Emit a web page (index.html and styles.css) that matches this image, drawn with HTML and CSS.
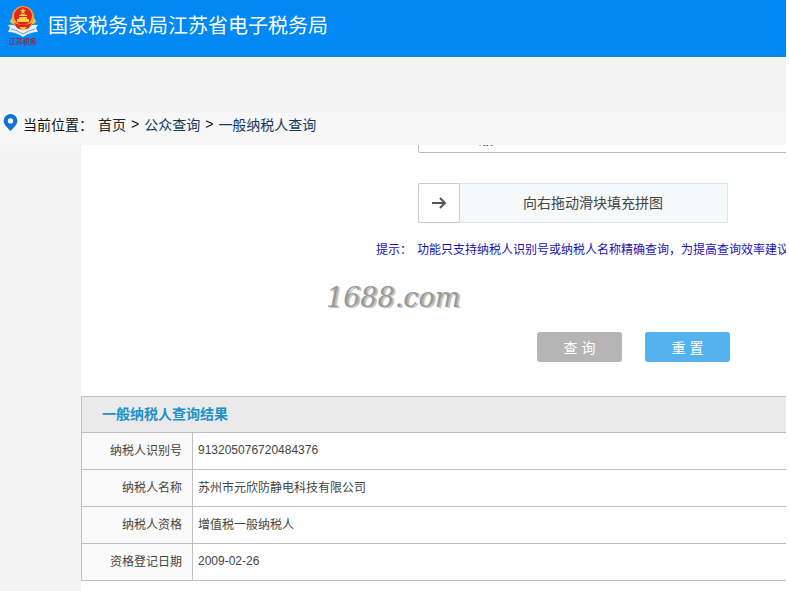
FILE: index.html
```html
<!DOCTYPE html>
<html lang="zh-CN">
<head>
<meta charset="utf-8">
<title>国家税务总局江苏省电子税务局</title>
<link rel="stylesheet" href="styles.css">
</head>
<body>
<header class="header">
  <svg class="logo" viewBox="0 0 32 42" aria-hidden="true">
    <path d="M1 20q7-1 15 5q8-6 15-5l-2 3 2 4q-8 0-15 5Q9 27 1 27l2-4z" fill="#e9f2fb"/>
    <path d="M3 16q5 1 13 8q8-7 13-8M4 24q6 1 12 5q6-4 12-5" fill="none" stroke="#6c9fce"/>
    <path d="M5 13q-3 3-1 5q4 1 7 6h10q3-5 7-6q2-2-1-5z" fill="#f4c542"/>
    <circle cx="16" cy="12" r="11" fill="#f2a632"/>
    <circle cx="16" cy="11" r="9" fill="#e3241b"/>
    <path d="M16 3l1 2h2l-2 2 1 2-2-1-2 1 1-2-2-2h2zM10 14h2v-2h8v2h2v3H10zM12 10l4-1 4 1v1h-8z" fill="#ffd24a"/>
    <path d="M7 18q9 4 18 0l-3 5q-6 3-12 0z" fill="#d9251c"/>
    <path d="M12 22h8l-4 4z" fill="#f4c542"/>
    <text class="logo-text" x="16" y="39" text-anchor="middle">江苏税务</text>
  </svg>
  <h1 class="title">国家税务总局江苏省电子税务局</h1>
</header>
<nav class="crumbs" aria-label="当前位置">
  <svg class="pin" viewBox="0 0 14 16" aria-hidden="true"><path fill-rule="evenodd" d="M7 0a6.500 6.500 0 0 1 6.500 6.500C13.500 10 9.500 13 7 16 4.500 13 .5 10 .5 6.500A6.500 6.500 0 0 1 7 0zm0 4a2.500 2.500 0 1 0 0 5 2.500 2.500 0 0 0 0-5z" fill="#1273d4"/></svg>
  <span class="crumb-label">当前位置：</span>
  <a class="home" href="#">首页</a><span>&gt;</span><a href="#">公众查询</a><span>&gt;</span><a href="#">一般纳税人查询</a>
</nav>
<main class="main">
  <form class="form">
    <input class="field" type="text" aria-label="验证码" value="版">
    <div class="slider">
      <button class="handle" type="button" aria-label="拖动滑块">
        <svg class="arrow" viewBox="0 0 16 12" aria-hidden="true"><path d="M1 6h13M9 1l5 5-5 5" fill="none" stroke="#555" stroke-width="2"/></svg>
      </button>
      <span class="slider-text">向右拖动滑块填充拼图</span>
    </div>
    <p class="hint"><span class="hint-label">提示：</span><span>功能只支持纳税人识别号或纳税人名称精确查询，为提高查询效率建议</span></p>
    <div class="actions">
      <button class="btn query" type="button">查 询</button>
      <button class="btn reset" type="reset">重 置</button>
    </div>
    <span class="watermark">1688.com</span>
  </form>
  <table class="result">
    <thead><tr><th class="result-title" colspan="2">一般纳税人查询结果</th></tr></thead>
    <tbody>
      <tr><th scope="row">纳税人识别号</th><td>913205076720484376</td></tr>
      <tr><th scope="row">纳税人名称</th><td>苏州市元欣防静电科技有限公司</td></tr>
      <tr><th scope="row">纳税人资格</th><td>增值税一般纳税人</td></tr>
      <tr><th scope="row">资格登记日期</th><td>2009-02-26</td></tr>
    </tbody>
  </table>
</main>
</body>
</html>
```
FILE: styles.css
```css
* { box-sizing: border-box; }
html { background: #fff; }
body {
  margin: 0 3px 0 0;
  min-height: 100vh;
  display: flex;
  flex-direction: column;
  background: #f4f4f4;
  color: #333;
  font-family: "Liberation Sans", "Noto Sans CJK SC", sans-serif;
  font-size: 14px;
}
.header {
  display: flex;
  align-items: center;
  gap: 9px;
  height: 57px;
  padding: 0 7px 4px;
  background: #0088f5;
  border-bottom: 1px solid #1b80cf;
}
.logo { width: 32px; height: 42px; }
.logo-text { font-size: 7px; font-weight: bold; fill: #8c2c55; }
.title { margin: 0; color: #fff; font-size: 20px; font-weight: 400; line-height: 30px; }
.crumbs {
  display: flex;
  align-items: center;
  gap: 5px;
  height: 32px;
  margin-top: 56px;
  padding: 0 3px 10px;
  background: #f7f7f7;
  color: #111;
}
.pin { width: 15px; height: 17px; margin-bottom: 4px; }
.crumbs a { color: #123a5e; text-decoration: none; }
.crumbs .home { color: #222; }
.main {
  flex: 1;
  margin-left: 81px;
  background: #fff;
  overflow: hidden;
}
.form { position: relative; height: 251px; overflow: hidden; }
.field {
  display: block;
  width: 420px;
  height: 36px;
  margin: -28px 0 0 337px;
  padding: 6px 60px 0;
  border: 1px solid #bbb;
  border-radius: 2px;
  color: #444;
  font: inherit;
}
.slider {
  display: flex;
  width: 310px;
  height: 40px;
  margin: 30px 0 0 337px;
  background: #f5f9fa;
  border: 1px solid #e0e5e8;
}
.handle {
  display: flex;
  align-items: center;
  justify-content: center;
  width: 42px;
  height: 40px;
  margin: -1px;
  padding: 0;
  background: #fff;
  border: 1px solid #ccc;
  border-radius: 2px;
}
.arrow { width: 16px; height: 12px; }
.slider-text { flex: 1; color: #444; line-height: 38px; text-align: center; }
.hint {
  display: flex;
  gap: 5px;
  margin: 17px 0 0 295px;
  color: #1a0fb4;
  font-size: 12px;
  line-height: 20px;
  white-space: nowrap;
}
.hint-label { width: 36px; }
.actions { display: flex; gap: 23px; margin: 72px 0 0 456px; }
.btn {
  width: 85px;
  height: 30px;
  padding: 0;
  border: 0;
  border-radius: 3px;
  color: #fff;
  font: inherit;
}
.query { background: #b5b5b5; }
.reset { background: #56b2ee; }
.watermark {
  position: absolute;
  left: 245px;
  top: 137px;
  color: #999;
  font: italic 27px/32px "DejaVu Serif", serif;
  text-shadow: 2px 1px 1px #bbb;
}
.result { width: 100%; border-collapse: collapse; font-size: 12px; color: #444; }
.result tr { height: 37px; }
.result thead tr { height: 36px; }
.result th, .result td { padding: 0 5px 3px; border: 1px solid #c0c0c0; border-right: 0; }
.result th { width: 111px; padding-right: 10px; background: #fafafa; font-weight: 400; text-align: right; }
.result .result-title {
  padding-left: 20px;
  background: #eaeaea;
  color: #2090cc;
  font-size: 14px;
  font-weight: 700;
  text-align: left;
}
```
